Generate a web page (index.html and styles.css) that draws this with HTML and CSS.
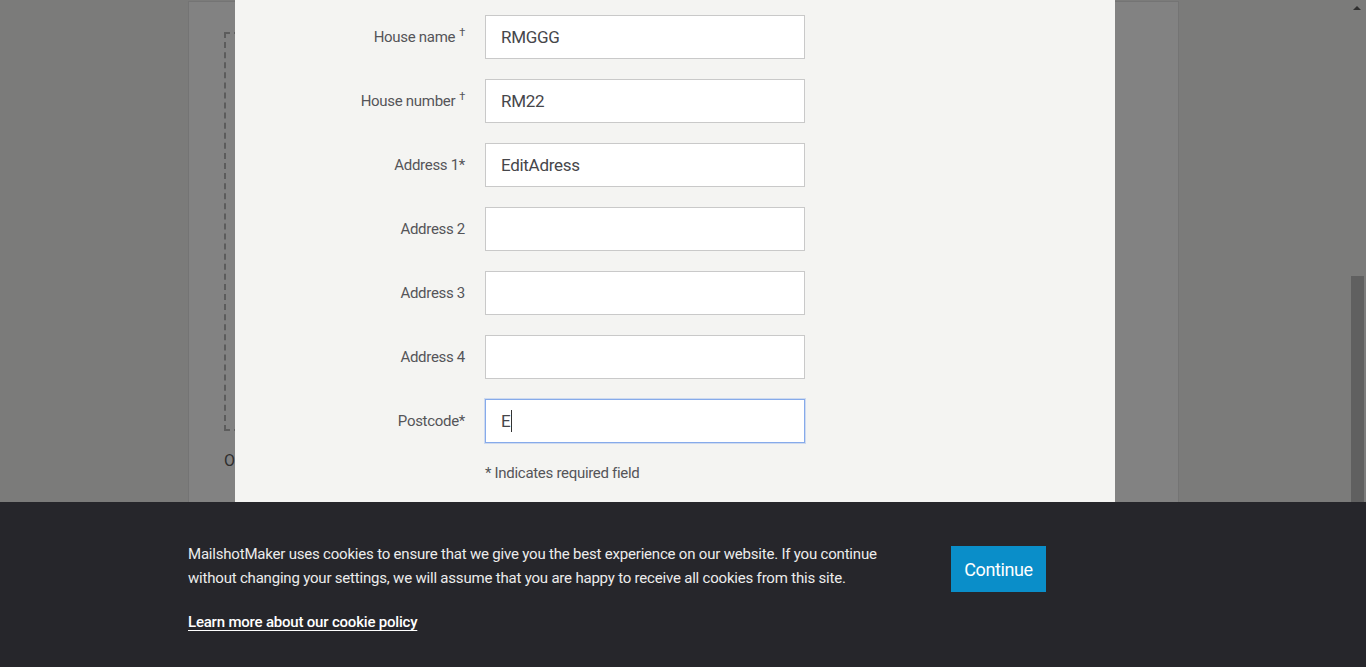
FILE: index.html
```html
<!DOCTYPE html>
<html lang="en">
<head>
<meta charset="utf-8">
<title>Edit address</title>
<link rel="stylesheet" href="styles.css">
</head>
<body>
<div class="viewport">
  <div class="page">
    <div class="panel">
      <div class="dashed"></div>
      <div class="behind-text">Or</div>
    </div>
  </div>
  <div class="scrollbar">
    <div class="arrow"></div>
    <div class="thumb"></div>
  </div>

  <div class="modal">
    <form class="form">
      <label class="lbl">House name<sup>&dagger;</sup></label>
      <div class="field">RMGGG</div>
      <label class="lbl">House number<sup>&dagger;</sup></label>
      <div class="field">RM22</div>
      <label class="lbl">Address 1*</label>
      <div class="field">EditAdress</div>
      <label class="lbl">Address 2</label>
      <div class="field"></div>
      <label class="lbl">Address 3</label>
      <div class="field"></div>
      <label class="lbl">Address 4</label>
      <div class="field"></div>
      <label class="lbl">Postcode*</label>
      <div class="field focus">E<span class="caret"></span></div>
      <span></span>
      <p class="note">* Indicates required field</p>
    </form>
  </div>

  <div class="cookie">
    <div class="cookie-inner">
      <div class="cookie-text">
        <p>MailshotMaker uses cookies to ensure that we give you the best experience on our website. If you continue without changing your settings, we will assume that you are happy to receive all cookies from this site.</p>
        <a href="#" class="policy">Learn more about our cookie policy</a>
      </div>
      <button class="continue" type="button">Continue</button>
    </div>
  </div>
</div>
</body>
</html>
```

FILE: styles.css
```css
* { box-sizing: border-box; }
html, body { margin: 0; padding: 0; height: 100%; overflow: hidden; }
body {
  font-family: Roboto, "Liberation Sans", sans-serif;
  background: #7b7b7a;
}
.viewport {
  position: relative;
  width: 1366px;
  height: 667px;
  display: flex;
  overflow: hidden;
}
.page {
  flex: 1;
  padding-top: 1px;
  padding-left: 188px;
}
.panel {
  width: 991px;
  height: 666px;
  background: #828282;
  border: 1px solid #747474;
  border-bottom: none;
  padding: 30px 0 0 35px;
}
.dashed {
  width: 300px;
  height: 399px;
  border: 2px dashed #5c5c5c;
  border-right: none;
}
.behind-text {
  margin-top: 20px;
  font-size: 16px;
  color: #2e2e2e;
}
.scrollbar {
  width: 17px;
  position: relative;
  background: #7b7b7a;
}
.arrow {
  position: absolute;
  left: 4px;
  top: 6px;
  width: 0;
  height: 0;
  border-left: 4px solid transparent;
  border-right: 4px solid transparent;
  border-bottom: 4px solid #2f2f2f;
}
.thumb {
  position: absolute;
  left: 2px;
  top: 276px;
  width: 13px;
  height: 240px;
  background: #606060;
}
.modal {
  position: absolute;
  left: 235px;
  top: 0;
  width: 880px;
  height: 667px;
  background: #f4f4f2;
  padding-top: 15px;
}
.form {
  display: grid;
  grid-template-columns: 230px 320px;
  column-gap: 20px;
  row-gap: 20px;
  margin: 0;
}
.lbl {
  justify-self: end;
  align-self: center;
  font-size: 15px;
  letter-spacing: -0.3px;
  color: #555559;
  line-height: 20px;
}
.lbl sup {
  font-size: 11px;
  margin-left: 4px;
  vertical-align: 6px;
  line-height: 0;
}
.field {
  height: 44px;
  background: #fff;
  border: 1px solid #c9c9c9;
  padding: 0 15px;
  display: flex;
  align-items: center;
  font-size: 17px;
  letter-spacing: -0.3px;
  color: #46464a;
}
.field.focus {
  border-color: #86aaea;
  box-shadow: 0 0 0 1px rgba(134,170,234,0.35);
}
.caret {
  display: inline-block;
  width: 1px;
  height: 22px;
  background: #333;
  margin-left: 1px;
}
.note {
  margin: 0;
  margin-top: 1px;
  font-size: 15px;
  letter-spacing: -0.3px;
  color: #555559;
}
.cookie {
  position: absolute;
  left: 0;
  bottom: 0;
  width: 1366px;
  height: 165px;
  background: #26262b;
  padding: 40px 0 0 188px;
}
.cookie-inner {
  display: flex;
  align-items: flex-start;
}
.cookie-text {
  width: 763px;
  padding-right: 50px;
}
.cookie-text p {
  margin: 0 0 20px;
  font-size: 15px;
  line-height: 24px;
  letter-spacing: -0.2px;
  color: #ececec;
}
.policy {
  font-size: 15px;
  line-height: 24px;
  letter-spacing: -0.2px;
  color: #ffffff;
  font-weight: 500;
  text-decoration: underline;
  text-underline-offset: 3px;
}
.continue {
  margin-top: 4px;
  width: 95px;
  height: 46px;
  border: none;
  background: #0a8ec9;
  color: #fff;
  font-family: Roboto, "Liberation Sans", sans-serif;
  font-size: 18px;
  letter-spacing: -0.4px;
  padding: 0;
}
```
